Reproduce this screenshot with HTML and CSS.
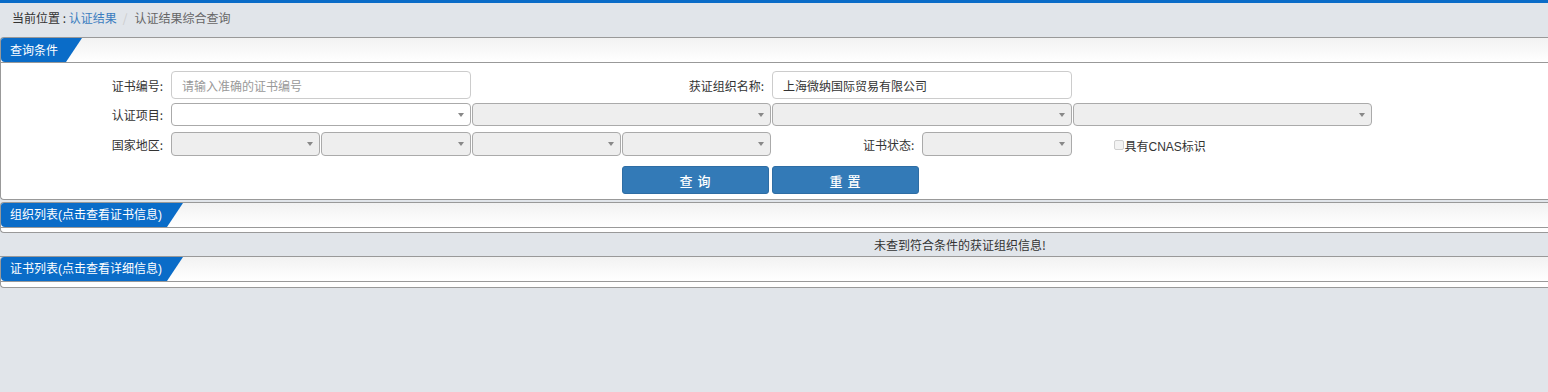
FILE: index.html
```html
<!DOCTYPE html>
<html lang="zh-CN">
<head>
  <meta charset="UTF-8" />
  <title>认证结果综合查询</title>
  <link rel="stylesheet" href="styles.css">
</head>
<body>
  <div class="top-bar"></div>

  <div class="page">
    <div class="breadcrumb">
      <span class="crumb-label">当前位置 : </span><a href="#">认证结果</a><span class="divider">/</span><span class="current">认证结果综合查询</span>
    </div>

    <div class="panel">
      <div class="panel-head"><span class="tab">查询条件</span></div>
      <div class="panel-body">
        <div class="query-grid">
          <label class="field-label r1">证书编号:</label>
          <input class="text-input r1 c2-4" type="text" placeholder="请输入准确的证书编号">
          <label class="field-label r1 c4-6">获证组织名称:</label>
          <input class="text-input r1 c6-8" type="text" value="上海微纳国际贸易有限公司">

          <label class="field-label r2">认证项目:</label>
          <div class="select white r2 c2-4"><span class="arrow"></span></div>
          <div class="select r2 c4-6"><span class="arrow"></span></div>
          <div class="select r2 c6-8"><span class="arrow"></span></div>
          <div class="select r2 c8-10"><span class="arrow"></span></div>

          <label class="field-label r3">国家地区:</label>
          <div class="select tall r3 c2"><span class="arrow"></span></div>
          <div class="select tall r3 c3"><span class="arrow"></span></div>
          <div class="select tall r3 c4"><span class="arrow"></span></div>
          <div class="select tall r3 c5"><span class="arrow"></span></div>
          <label class="field-label r3 c6">证书状态:</label>
          <div class="select tall r3 c7"><span class="arrow"></span></div>
          <label class="cnas r3 c8"><span class="check"></span>具有CNAS标识</label>

          <button class="btn r4 c5" type="button">查 询</button>
          <button class="btn r4 c6" type="button">重 置</button>
        </div>
      </div>
    </div>

    <div class="panel gap">
      <div class="panel-head"><span class="tab wide">组织列表(点击查看证书信息)</span></div>
      <div class="panel-body empty"></div>
    </div>

    <div class="message">未查到符合条件的获证组织信息!</div>

    <div class="panel">
      <div class="panel-head"><span class="tab wide">证书列表(点击查看详细信息)</span></div>
      <div class="panel-body empty tail"></div>
    </div>
  </div>
</body>
</html>
```

FILE: styles.css
```css
html {
  overflow: hidden;
}

body {
  margin: 0;
  background-color: #e1e5ea;
  font-family: "Noto Sans CJK SC", "Liberation Sans", sans-serif;
  font-size: 12px;
  color: #333;
}

.top-bar {
  height: 3px;
  background-color: #0a6cc8;
}

.page {
  width: 1920px;
}

.breadcrumb {
  height: 30px;
  line-height: 30px;
  padding: 0 13px 0 12px;
  margin-bottom: 4px;
  white-space: nowrap;
}

.breadcrumb a {
  color: #3b7dbf;
  text-decoration: none;
}

.breadcrumb .divider {
  color: #ccc;
  padding: 0 7px 0 6px;
}

.breadcrumb .current {
  color: #666;
}

.panel {
  background-color: #fff;
  border: 1px solid #999;
  border-right: none;
  border-radius: 4px 0 0 4px;
}

.panel.gap {
  margin-top: 2px;
}

.panel-head {
  height: 24px;
  border-bottom: 1px solid #999;
  background: linear-gradient(#f2f2f2, #fff);
  border-radius: 4px 0 0 0;
}

.tab {
  display: block;
  width: 72px;
  height: 24px;
  line-height: 24px;
  padding-left: 9px;
  color: #fff;
  background-color: #0a6cc8;
  border-radius: 3px 0 0 4px;
  clip-path: polygon(0 0, 100% 0, calc(100% - 16px) 100%, 0 100%);
  white-space: nowrap;
}

.tab.wide {
  width: 173px;
  font-family: "Liberation Sans", "Noto Sans CJK SC", sans-serif;
}

.panel-body {
  height: 136px;
}

.panel-body.empty {
  height: 4px;
}

.panel-body.tail {
  height: 5px;
}

.query-grid {
  display: grid;
  grid-template-columns: 170px repeat(8, 150.25px);
  grid-template-rows: 30px 29px 30px 40px;
  padding-top: 7px;
}

.r1 { grid-row: 1; }
.r2 { grid-row: 2; }
.r3 { grid-row: 3; }
.r4 { grid-row: 4; }
.c2 { grid-column: 2; }
.c3 { grid-column: 3; }
.c4 { grid-column: 4; }
.c5 { grid-column: 5; }
.c6 { grid-column: 6; }
.c7 { grid-column: 7; }
.c8 { grid-column: 8; }
.c2-4 { grid-column: 2 / 4; }
.c4-6 { grid-column: 4 / 6; }
.c6-8 { grid-column: 6 / 8; }
.c8-10 { grid-column: 8 / 10; }

.field-label {
  grid-column-start: 1;
  align-self: center;
  text-align: right;
  padding-right: 8px;
  white-space: nowrap;
}

.field-label.c4-6 { grid-column: 4 / 6; }
.field-label.c6 { grid-column: 6; }

.text-input {
  box-sizing: border-box;
  align-self: center;
  width: calc(100% - 0.5px);
  height: 28px;
  padding: 0 10px;
  border: 1px solid #ccc;
  border-radius: 4px;
  font-family: inherit;
  font-size: 12px;
  color: #333;
  outline: none;
}

.text-input::placeholder {
  color: #999;
}

.select {
  position: relative;
  box-sizing: border-box;
  align-self: center;
  width: calc(100% - 1px);
  height: 23px;
  background-color: #eee;
  border: 1px solid #aaa;
  border-radius: 4px;
}

.select.white {
  background-color: #fff;
}

.select.tall {
  height: 24px;
}

.select .arrow {
  position: absolute;
  right: 6px;
  top: 50%;
  margin-top: -2px;
  border-left: 3px solid transparent;
  border-right: 3px solid transparent;
  border-top: 4px solid #888;
}

.cnas {
  align-self: center;
  display: flex;
  align-items: center;
  padding-left: 41px;
  margin-top: 2px;
  font-family: "Liberation Sans", "Noto Sans CJK SC", sans-serif;
  white-space: nowrap;
}

.check {
  box-sizing: border-box;
  width: 10px;
  height: 10px;
  margin-right: 1px;
  border: 1px solid #d0d0d0;
  border-radius: 2px;
  background-color: #f3f3f3;
}

.btn {
  align-self: start;
  margin-top: 7px;
  width: 147px;
  height: 28px;
  background-color: #337ab7;
  border: 1px solid #2e6da4;
  border-radius: 3px;
  color: #fff;
  font-family: inherit;
  font-size: 13px;
  font-weight: 500;
  letter-spacing: 1px;
}

.btn.c5 {
  margin-left: 0.25px;
}

.message {
  height: 23px;
  line-height: 23px;
  text-align: center;
  border-bottom: 1px solid #999;
}

.message + .panel {
  border-top: none;
}
```
